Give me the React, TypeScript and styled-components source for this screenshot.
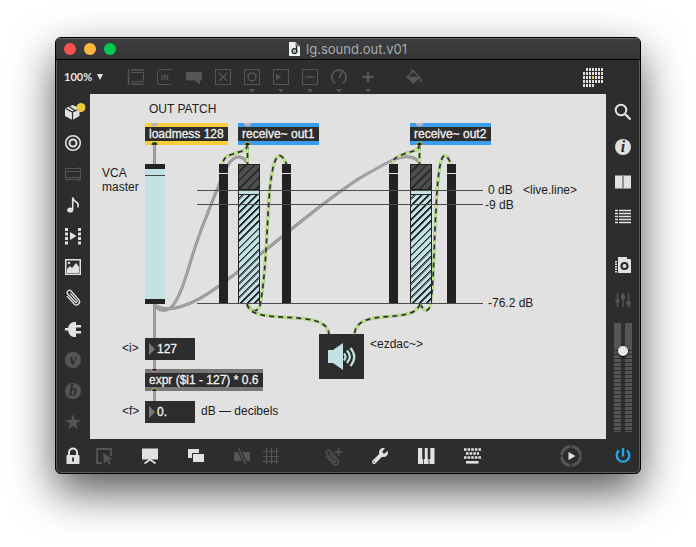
import React, { ReactNode, useState } from 'react';
import styled, { createGlobalStyle, css } from 'styled-components';
import { FaWrench } from 'react-icons/fa';

const ink = '#2d2d2d';
const light = '#e1e1e1';
const dim = '#555555';
const aqua = '#c1e1e4';

const GlobalStyle = createGlobalStyle`
  * { box-sizing: border-box; }
  body { margin: 0; background: #fff; font: 12px/14px "Liberation Sans", Arial, sans-serif; }
  button, input, select { margin: 0; padding: 0; border: 0; font: inherit; }
`;

const Desktop = styled.div`
  min-height: 100vh;
  padding: 37px 55px 73px;
  display: flex;
`;

const Frame = styled.main`
  flex: 1;
  min-width: 0;
  display: flex;
  flex-direction: column;
  overflow: hidden;
  border: 1px solid #000;
  border-radius: 6px;
  background: ${ink};
  box-shadow: inset 0 0 0 1px #5c5c5c, 0 18px 44px rgba(0, 0, 0, 0.66);
`;

const TitleBar = styled.header`
  height: 22px;
  display: grid;
  grid-template-columns: 1fr auto 1fr;
  align-items: center;
  padding: 0 8px;
  border-bottom: 1px solid #000;
  background: linear-gradient(#3d3f40, #333536);
  box-shadow: inset 0 1px 0 #666;
`;

const Lights = styled.div`
  display: flex;
  gap: 8px;
`;

const Light = styled.button<{ $color: string }>`
  width: 12px;
  height: 12px;
  border-radius: 50%;
  background: ${p => p.$color};
`;

const Title = styled.h1`
  margin: 0;
  display: flex;
  align-items: center;
  gap: 6px;
  color: #a9abac;
  font: 400 13px/20px Inter, sans-serif;
`;

const Toolbar = styled.div`
  height: 34px;
  display: flex;
  align-items: center;
  gap: 22px;
  padding: 0 35px 0 8px;
`;

const BottomBar = styled(Toolbar).attrs({ as: 'footer' })`
  padding: 0 5px;
`;

const Group = styled.div<{ $gap: number; $before?: number; $end?: boolean }>`
  display: flex;
  align-items: center;
  gap: ${p => p.$gap}px;
  margin-left: ${p => (p.$end ? 'auto' : `${p.$before ?? 0}px`)};
`;

const Zoom = styled.label`
  display: flex;
  align-items: center;
  gap: 3px;
  width: 38px;
  color: #e6e6e6;
`;

const ZoomSelect = styled.select`
  appearance: none;
  flex: none;
  width: 30px;
  background: transparent;
  color: inherit;
  font: 700 11px/16px Lato, sans-serif;
`;

const Caret = styled.svg`
  flex: none;
  pointer-events: none;
`;

const IconButton = styled.button<{ $color: string }>`
  flex: none;
  display: grid;
  place-items: center;
  width: 24px;
  height: 24px;
  background: none;
  color: ${p => p.$color};
  svg { overflow: visible; }
`;

const Body = styled.div`
  flex: 1;
  display: flex;
`;

const Side = styled.nav<{ $gap: number }>`
  flex: none;
  width: 34px;
  padding-top: 6px;
  display: flex;
  flex-direction: column;
  align-items: center;
  gap: ${p => p.$gap}px;
`;

const SideGroup = styled(Side).attrs({ as: 'div' })`
  padding-top: 13px;
`;

const Level = styled.input`
  appearance: none;
  writing-mode: vertical-lr;
  direction: rtl;
  width: 18px;
  height: 109px;
  background:
    linear-gradient(${ink}, ${ink}) 7px 0 / 4px 100% no-repeat,
    linear-gradient(${dim}, ${dim}) 0 0 / 100% 24px no-repeat,
    repeating-linear-gradient(${dim} 0 3px, ${ink} 3px 4px);
  &::-webkit-slider-thumb {
    appearance: none;
    width: 10px;
    height: 10px;
    border-radius: 50%;
    background: #e8e8e8;
    box-shadow: 0 1px 2px #000;
  }
`;

const Patcher = styled.section`
  position: relative;
  flex: 1;
  min-width: 0;
  min-height: 345px;
  overflow: hidden;
  background: ${light};
  color: #1c1c1c;
`;

interface Spot { $x: number; $y: number }

const at = css<Spot>`
  position: absolute;
  left: ${p => p.$x}px;
  top: ${p => p.$y}px;
`;

const Comment = styled.p<Spot>`
  ${at}
  margin: 0;
  white-space: pre;
`;

const ObjectBox = styled.div<Spot & { $w: number; $edge: string }>`
  ${at}
  width: ${p => p.$w}px;
  height: 22px;
  padding-left: 4px;
  border: solid ${p => p.$edge};
  border-width: 4px 0;
  background: ${ink};
  color: #f2f2f2;
  white-space: pre;
  -webkit-text-stroke: 0.3px #f2f2f2;
`;

const NumberBox = styled.input<Spot>`
  ${at}
  width: 50px;
  height: 22px;
  padding-left: 12px;
  background: ${ink};
  color: #f2f2f2;
  -webkit-text-stroke: 0.3px #f2f2f2;
`;

const Fader = styled.input<Spot>`
  ${at}
  appearance: none;
  writing-mode: vertical-lr;
  direction: rtl;
  width: 20px;
  height: 140px;
  border: solid #242424;
  border-width: 5px 0;
  background: ${aqua};
  &::-webkit-slider-thumb {
    appearance: none;
    width: 20px;
    height: 1px;
    background: #444;
  }
`;

const Gain = styled.input<Spot>`
  ${at}
  appearance: none;
  writing-mode: vertical-lr;
  direction: rtl;
  width: 22px;
  height: 140px;
  border: 1px solid #222;
  background:
    repeating-linear-gradient(135deg, #4e4e4e 0 4px, #2b2b2b 4px 6px) 0 0 / 100% 24px no-repeat,
    repeating-linear-gradient(135deg, ${aqua} 0 3px, #222 3px 4px, #667577 4px 5px);
  &::-webkit-slider-thumb {
    appearance: none;
    width: 20px;
    height: 6px;
    border-top: 1px solid #222;
    border-bottom: 1px solid #222;
    background: ${aqua};
  }
`;

const Meter = styled.div<Spot>`
  ${at}
  width: 9px;
  height: 139px;
  background: linear-gradient(${light}, ${light}) 0 9px / 100% 1px no-repeat #222;
`;

const LiveLine = styled.hr<Spot>`
  ${at}
  width: 286px;
  height: 1px;
  margin: 0;
  border: 0;
  background: #4b4b4b;
`;

const Dac = styled.button<Spot>`
  ${at}
  width: 45px;
  height: 45px;
  background: ${ink};
`;

const Layer = styled.svg`
  position: absolute;
  left: 0;
  top: 0;
  pointer-events: none;
`;

const drop = <path d="M9 24h6l-3 3.5z" fill="currentColor" />;
const square = <rect x="4.5" y="4.5" width="15" height="15" fill="none" stroke="currentColor" />;
const clip = (
  <path
    d="M8.8 7v10a3.2 3.200 0 0 0 6.400 0V5.500a2.200 2.200 0 0 0-4.400 0v10.800a1.200 1.200 0 0 0 2.400 0V7.500"
    transform="rotate(-42 12 12)"
    fill="none"
    stroke="currentColor"
    strokeWidth="1.3"
    strokeLinecap="round"
  />
);
const badge = (letter: string) => (
  <>
    <circle cx="12" cy="12" r="8" fill="currentColor" />
    <text x="12" y="17" textAnchor="middle" fill={ink} fontFamily="Liberation Serif, serif" fontSize="16" fontWeight="700" fontStyle="italic">{letter}</text>
  </>
);

const icons: Record<string, ReactNode> = {
  Object: <g fill="none" stroke="currentColor"><path d="M4.5 4v16M7 5h13M7 19h13" strokeWidth="1.5" /><path d="M7 7.5h12.5v9H7" /></g>,
  Message: <><path d="M19 4.5H7.5q-3 0-3 3v12H16q3 0 3-1" fill="none" stroke="currentColor" /><text x="12" y="15" textAnchor="middle" fontFamily="Liberation Serif, serif" fontSize="10" fontWeight="700" fontStyle="italic" fill="currentColor">m</text></>,
  Comment: <path d="M4 7h16v8.500h-2V20l-5-4.500H4z" fill="currentColor" />,
  Toggle: <>{square}<path d="m8 8 8 8m0-8-8 8" stroke="currentColor" strokeWidth="1.3" /></>,
  Button: <>{square}<circle cx="12" cy="12" r="4" fill="none" stroke="currentColor" strokeWidth="1.5" />{drop}</>,
  Number: <>{square}<path d="m7 9 5.5 3L7 15z" fill="currentColor" />{drop}</>,
  Slider: <>{square}<path d="M7 12h10" stroke="currentColor" strokeWidth="1.5" />{drop}</>,
  Dial: <><path d="M8.2 18.3A7.2 7.2 0 1 1 15.8 18.3M12 13l3-6" fill="none" stroke="currentColor" strokeWidth="1.8" />{drop}</>,
  Add: <><path d="M12 6.5v11M6.5 12h11" stroke="currentColor" strokeWidth="2.5" />{drop}</>,
  Fill: <><path d="m5 12.5 6.5-6.5 6.5 6.5z" fill="none" stroke="currentColor" strokeWidth="1.3" /><path d="m4.5 12.5 7 6.5 6.5-6.5zM17.5 12q3.5 4 2 5.5-2 .5-2-2zM11 5l-3-1 3.5 6z" fill="currentColor" /></>,
  Packages: <><path d="m11.5 5 7 3v8l-7 4L4 16V8.5z" fill="currentColor" /><path d="m4.500 8.500 7 3.500L18 9M11.500 12v8M8 6.500l6 4" stroke={ink} strokeWidth="1.2" fill="none" /><circle cx="20" cy="7.5" r="4.5" fill="#ebcb38" /></>,
  Target: <g fill="none" stroke="currentColor" strokeWidth="1.6"><circle cx="12" cy="12" r="7.3" /><circle cx="12" cy="12" r="3.5" strokeWidth="2" /></g>,
  Amp: <g fill="none" stroke="currentColor"><path d="M4.5 6.5h15v11h-15zM5 9.5h14M5 15.5h14M6 18v1.5M18 18v1.5M6 5v1M18 5v1" /></g>,
  Note: <><ellipse cx="9.2" cy="17" rx="3" ry="2.6" fill="currentColor" /><path d="M11.7 17V4.5q1 3 3.5 4.5 3 2 1.5 5.5" fill="none" stroke="currentColor" strokeWidth="1.6" /></>,
  Clips: <><path d="M5.5 4v17M18.5 4v17" stroke="currentColor" strokeWidth="3" strokeDasharray="3 1.5" /><path d="m9 8 6.5 4L9 16z" fill="currentColor" /></>,
  Images: <><rect x="4.75" y="4.75" width="14.5" height="14.5" fill="none" stroke="currentColor" strokeWidth="1.5" /><path d="M6 18v-4l3-3 2 2 4-5 3 4v6z" fill="currentColor" /><circle cx="8" cy="8" r="1.2" fill="currentColor" /></>,
  Attachments: clip,
  Plugins: <path d="M12.5 5H15v3h5v2.5h-5V14h5v2.5h-5V20h-2.5Q8 19 7 13.5H4V11h3Q8 6 12.5 5z" fill="currentColor" />,
  Vizzie: badge('v'),
  Beap: badge('b'),
  Favorites: <path d="m12 4 2 6h6l-5 3.5 2 6-5-3.7-5 3.700 2-6L4 10h6z" fill="currentColor" />,
  Search: <><circle cx="10" cy="10" r="5.3" fill="none" stroke="currentColor" strokeWidth="2" /><path d="m14 14 5.5 5.5" stroke="currentColor" strokeWidth="2.4" /></>,
  Inspector: badge('i'),
  Reference: <><path d="M4 5.5h16v13H4z" fill="currentColor" /><path d="M12 5.5v13" stroke="#777" strokeWidth="1.5" /></>,
  Console: <><path d="M4 5.5h16M4 8.5h16M4 11.5h16M4 14.5h16M4 17.5h16" stroke="currentColor" strokeWidth="1.5" /><path d="M7.5 4v15" stroke={ink} /></>,
  Snapshot: <><path d="M7 4h9v2h3l1 1v13H7z" fill="currentColor" /><path d="M5 8v12" stroke="currentColor" strokeWidth="2" strokeDasharray="1.5 1" /><circle cx="13.5" cy="13" r="3" fill="none" stroke={ink} strokeWidth="2.2" /></>,
  Mixer: <><path d="M6.5 5v14M12 5v14M17.5 5v14" stroke="currentColor" strokeWidth="1.5" /><g fill="currentColor"><circle cx="6.5" cy="13" r="2.3" /><circle cx="12" cy="9" r="2.3" /><circle cx="17.5" cy="15" r="2.3" /></g></>,
  Lock: <><rect x="5.5" y="11" width="13" height="9" rx="1" fill="currentColor" /><path d="M8 12V8.5a4 4 0 0 1 8 0V12" fill="none" stroke="currentColor" strokeWidth="2" /><path d="M12 13.5v4" stroke={ink} strokeWidth="1.8" /></>,
  Select: <><path d="M10 19H5V5h14v7" fill="none" stroke="currentColor" strokeWidth="1.8" /><path d="m11 9 9.5 6-4 .8 2.5 4.2-2 1-2.3-4.2L12 19.800z" fill="currentColor" /></>,
  Presentation: <><path d="M4 4.5h16v11H4z" fill="currentColor" /><path d="m6.5 19.5 5.5-4 5.5 4" fill="none" stroke="currentColor" strokeWidth="1.8" /></>,
  Windows: <><path d="M4 5h11v9H4z" fill="currentColor" /><path d="M8.5 9.500h12v9h-12z" fill="currentColor" stroke={ink} /></>,
  Mute: <><path d="M4 8h16v9H4z" fill="currentColor" /><path d="m8.500 4 7 16" stroke={ink} strokeWidth="4" /><path d="m8.500 4 7 16" stroke="currentColor" strokeWidth="1.4" /></>,
  Grid: <path d="M7.5 4v16M12.5 4v16M17.5 4v16M4 7.5h16M4 12.5h16M4 17.5h16" stroke="currentColor" strokeWidth="1.2" />,
  'Attach file': <><g transform="translate(-2 2)">{clip}</g><path d="M16.5 4v8M12.5 8h8" stroke="currentColor" strokeWidth="1.5" /></>,
  Piano: <><path d="M4 4h16.5v16H4z" fill="currentColor" /><path d="M9.5 4v11M15 4v11" stroke={ink} strokeWidth="2.6" /><path d="M9.5 15v5M15 15v5" stroke={ink} strokeWidth=".8" /></>,
  Keyboard: <><path d="M4 5.500h17M4 13.500h17M6 9.500h13" stroke="currentColor" strokeWidth="2.6" strokeDasharray="2.6 1" /><path d="M6 18.300h12.500" stroke="currentColor" strokeWidth="2.6" /></>,
  Transport: <><circle cx="12" cy="12" r="9.5" fill="none" stroke={dim} strokeWidth="3" strokeDasharray="13.4 1.52" strokeDashoffset="-.76" /><path d="m9.5 8 7 4-7 4z" fill="currentColor" /></>,
  Power: <path d="M12 4v8.5M8 6.5a6.3 6.3 0 1 0 8 0" fill="none" stroke="currentColor" strokeWidth="2.3" />,
};

const Icon = ({ name, color = light }: { name: string; color?: string }) => (
  <IconButton type="button" aria-label={name} $color={color}>
    <svg width="24" height="24" viewBox="0 0 24 24">{icons[name]}</svg>
  </IconButton>
);

const Calendar = () => {
  const rows = [[1, 6], [0, 7], [0, 7], [0, 7], [0, 4]];
  return (
    <IconButton type="button" aria-label="Dashboard" $color={light}>
      <svg width="24" height="24">
        {rows.flatMap(([from, count], r) =>
          Array.from({ length: count }, (_, c) => (
            <rect key={`${r}-${c}`} x={2 + (c + from) * 3} y={3 + r * 4} width="2" height="3" fill={r === 2 && c === 3 ? '#ebcb38' : light} />
          )),
        )}
      </svg>
    </IconButton>
  );
};

const greyCords = [
  'M154.5 144V164',
  'M154.5 304V338',
  'M154.5 360V371',
  'M154.5 389V401',
  'M154.5 304C158 312 168 313 174 304C186 286 190 256 205 220C216 192 222 176 228 165C233 156 242 153 248 164',
  'M154.5 304C166 315 192 306 219 286C260 256 300 221 330 199C345 188 352 183 360 178C372 171 386 163 395 159C404 156 416 155 420 164',
];

const signalCords = [
  'M247.5 144V164',
  'M247.5 144C247 152 240 151 233 154C227 156 224 157 222.5 164',
  'M419.5 144V164',
  'M419.5 144C419 152 411 151 404 154C397 157 393 158 392.5 164',
  'M247 304C252 314 260 313 261 300C266 270 267 225 269 200C271 167 277 142 286.5 164',
  'M420 304C425 313 430 313 431 300C434 280 434 240 436 210C438 165 442 142 451 164',
  'M247 304C252 328 326 306 329 334',
  'M420 304C413 326 357 306 354.5 334',
];

const Cords = () => (
  <Layer width="516" height="345" viewBox="90 94 516 345" fill="none">
    {greyCords.map(d => (
      <g key={d}>
        <path d={d} stroke="#8e8e8e" strokeWidth="3" />
        <path d={d} stroke="#a8a8a8" strokeWidth="1.4" />
      </g>
    ))}
    {signalCords.map(d => (
      <g key={d}>
        <path d={d} stroke="#a5b09a" strokeWidth="3" />
        <path d={d} stroke="#baf573" strokeWidth="2" />
        <path d={d} stroke="#303030" strokeWidth="1.7" strokeDasharray="5 4" />
      </g>
    ))}
  </Layer>
);

const Ports = () => (
  <Layer width="516" height="345" viewBox="90 94 516 345">
    {[154.5, 247.5, 419.5].map(x => <path key={x} d={`M${x - 3.5} 123h7a3.5 3.5 0 0 1-7 0`} fill="#b5b5b5" />)}
    <path d="M151.5 145a3 3 0 0 1 6 0z" fill="#26402c" />
    {[247.5, 419.5].map(x => <path key={x} d={`M${x - 3} 145a3 3 0 0 1 6 0`} fill="#222" stroke="#b6cf3d" />)}
    <path d="M151.5 369a3 2.5 0 0 0 6 0" fill="#222" stroke="#e89a8a" />
    <path d="M151.5 391a3 2.5 0 0 1 6 0" fill="#222" stroke="#b6cf3d" />
    <path d="m149 343 6 6-6 6zM149 406l6 6-6 6z" fill="#777" />
  </Layer>
);

const comments: [number, number, string][] = [
  [59, 8, 'OUT PATCH'],
  [12, 72, 'VCA\nmaster'],
  [398, 89, '0 dB'],
  [433, 89, '<live.line>'],
  [395, 104, '-9 dB'],
  [398, 202, '-76.2 dB'],
  [280, 243, '<ezdac~>'],
  [32, 247, '<i>'],
  [32, 310, '<f>'],
  [111, 310, 'dB — decibels'],
];

export default function App() {
  const [integer, setInteger] = useState('127');
  const [decibels, setDecibels] = useState('0.');

  return (
    <>
      <GlobalStyle />
      <Desktop>
        <Frame>
          <TitleBar>
            <Lights>
              <Light $color="#ff4f4b" aria-label="Close" />
              <Light $color="#ffb83d" aria-label="Minimize" />
              <Light $color="#00ca4e" aria-label="Zoom window" />
            </Lights>
            <Title>
              <svg width="11" height="14" viewBox="0 0 11 14">
                <path d="M0 0h6.5L11 4.5V14H0z" fill="#f0f0f0" />
                <path d="M6.5 0v4.500H11" fill="#777" />
                <circle cx="5.5" cy="9" r="2.4" fill="none" stroke="#222" strokeWidth="1.4" />
                <path d="M7.5 9V4" stroke="#222" strokeWidth="1.2" />
                <circle cx="5.5" cy="9" r="1" fill="#35a87e" />
              </svg>
              lg.sound.out.v01
            </Title>
          </TitleBar>
          <Toolbar>
            <Zoom>
              <ZoomSelect aria-label="Zoom level" defaultValue="100%">
                <option>100%</option>
                <option>75%</option>
                <option>50%</option>
              </ZoomSelect>
              <Caret width="6" height="6"><path d="M0 0h6L3 6z" fill="currentColor" /></Caret>
            </Zoom>
            <Group $gap={5}>
              {['Object', 'Message', 'Comment', 'Toggle', 'Button', 'Number', 'Slider', 'Dial', 'Add'].map(n => <Icon key={n} name={n} color={dim} />)}
            </Group>
            <Icon name="Fill" color={dim} />
            <Group $gap={0} $end><Calendar /></Group>
          </Toolbar>
          <Body>
            <Side $gap={7} aria-label="Browser">
              {['Packages', 'Target', 'Amp', 'Note', 'Clips', 'Images', 'Attachments', 'Plugins', 'Vizzie', 'Beap', 'Favorites'].map(n => (
                <Icon key={n} name={n} color={['Amp', 'Vizzie', 'Beap', 'Favorites'].includes(n) ? dim : light} />
              ))}
            </Side>
            <Patcher aria-label="Patcher">
              <ObjectBox $x={55} $y={29} $w={83} $edge="#f9d03c">loadmess 128</ObjectBox>
              <ObjectBox $x={148} $y={29} $w={81} $edge="#3a9df2">receive~ out1</ObjectBox>
              <ObjectBox $x={320} $y={29} $w={81} $edge="#3a9df2">receive~ out2</ObjectBox>
              <ObjectBox $x={55} $y={275} $w={118} $edge="#777">expr ($i1 - 127) * 0.6</ObjectBox>
              <Cords />
              <Fader type="range" aria-label="VCA master" defaultValue={95} $x={55} $y={70} />
              {[148, 320].map(x => <Gain key={x} type="range" aria-label="Gain" defaultValue={82} $x={x} $y={70} />)}
              {[129, 192, 299, 357].map(x => <Meter key={x} $x={x} $y={70} />)}
              {[96, 110, 209].map(y => <LiveLine key={y} $x={107} $y={y} />)}
              <NumberBox aria-label="Integer" value={integer} onChange={e => setInteger(e.target.value)} $x={55} $y={244} />
              <NumberBox aria-label="Decibels" value={decibels} onChange={e => setDecibels(e.target.value)} $x={55} $y={307} />
              <Dac type="button" aria-label="Audio on" $x={229} $y={240}>
                <svg width="45" height="45" viewBox="0 0 45 45">
                  <path d="M9 16h5l10-7v27l-10-7H9z" fill={aqua} />
                  <path d="M25 19.5q3 3 0 7M28 16.5q5.500 6 0 12.5M31.5 14q7.500 9 0 18" fill="none" stroke={aqua} strokeWidth="2.2" />
                </svg>
              </Dac>
              <Ports />
              {comments.map(([x, y, text]) => <Comment key={text} $x={x} $y={y}>{text}</Comment>)}
            </Patcher>
            <Side $gap={11} aria-label="Inspector panels">
              {['Search', 'Inspector', 'Reference', 'Console'].map(n => <Icon key={n} name={n} />)}
              <SideGroup $gap={11}>
                <Icon name="Snapshot" />
                <Icon name="Mixer" color={dim} />
                <Level type="range" aria-label="Output level" defaultValue={77} />
              </SideGroup>
            </Side>
          </Body>
          <BottomBar>
            <Group $gap={7}><Icon name="Lock" /><Icon name="Select" color={dim} /></Group>
            <Icon name="Presentation" />
            <Icon name="Windows" />
            <Group $gap={5}><Icon name="Mute" color={dim} /><Icon name="Grid" color={dim} /></Group>
            <Group $gap={22} $before={17}>
              <Icon name="Attach file" color={dim} />
              <IconButton type="button" aria-label="Tools" $color={light}><FaWrench size={16} /></IconButton>
              <Icon name="Piano" />
              <Icon name="Keyboard" />
            </Group>
            <Group $gap={28} $end>
              <Icon name="Transport" />
              <Icon name="Power" color="#1fa4ee" />
            </Group>
          </BottomBar>
        </Frame>
      </Desktop>
    </>
  );
}
